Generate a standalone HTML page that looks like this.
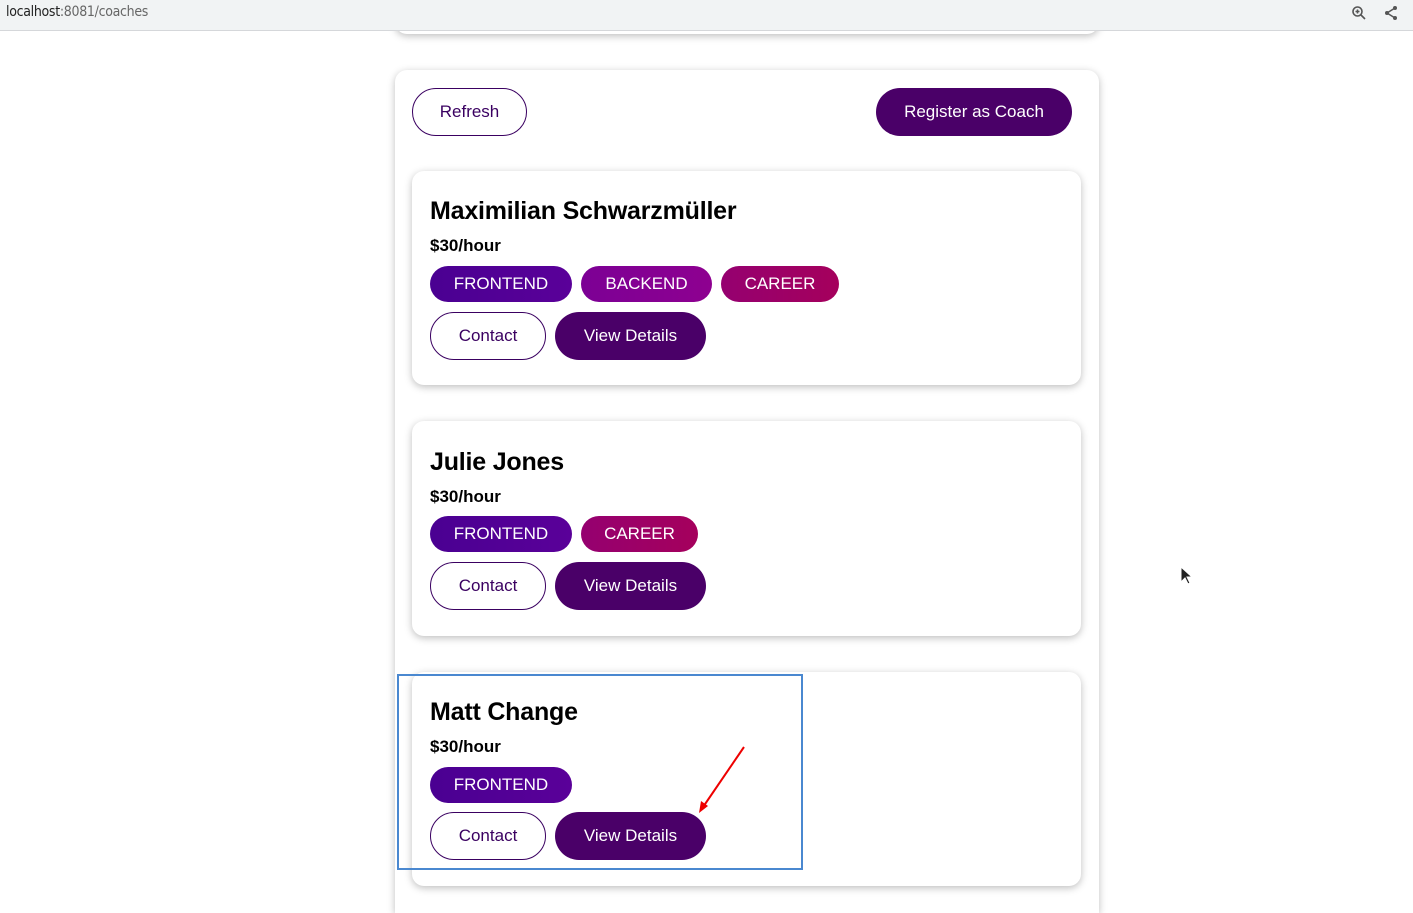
<!DOCTYPE html>
<html><head><meta charset="utf-8"><style>
*{box-sizing:border-box;margin:0;padding:0}
html,body{width:1413px;height:913px;overflow:hidden}
body{background:#fff;font-family:"Liberation Sans",Arial,sans-serif;position:relative}
.bar{position:absolute;left:0;top:0;width:1413px;height:31px;background:#f1f3f4;border-bottom:1px solid #d5d7da;z-index:5}
.url{position:absolute;left:6px;top:4px;font-size:14px;color:#222;font-family:"DejaVu Sans Condensed","Liberation Sans Narrow","Liberation Sans",sans-serif;letter-spacing:-0.3px}
.url span{color:#666}
.abs{position:absolute}
.card{position:absolute;background:#fff;border-radius:12px;box-shadow:0 2px 8px rgba(0,0,0,0.26)}
.pill{position:absolute;display:flex;align-items:center;justify-content:center;border-radius:30px;font-size:17px;color:#fff}
.out{background:#fff;border:1px solid #3a0061;color:#3a0061}
.dark{background:#4a0068}
.fe{background:linear-gradient(90deg,#4a0092,#5a0099)}
.be{background:linear-gradient(90deg,#7c0095,#8e0090)}
.ca{background:linear-gradient(90deg,#950070,#a5005c)}
h3{position:absolute;font-size:25px;font-weight:bold;color:#000;letter-spacing:-0.2px}
.pr{position:absolute;font-size:17px;font-weight:bold;color:#000}
</style></head><body>
<div class="bar"><div class="url">localhost<span>:8081/coaches</span></div>
<svg class="abs" style="left:1351px;top:5px" width="16" height="16" viewBox="0 0 16 16"><circle cx="6.5" cy="6.5" r="4.5" fill="none" stroke="#555" stroke-width="1.6"/><path d="M10 10l4 4M6.5 4.5v4M4.5 6.5h4" stroke="#555" stroke-width="1.6"/></svg>
<svg class="abs" style="left:1384px;top:5px" width="14" height="16" viewBox="0 0 14 16"><circle cx="11" cy="3" r="2" fill="#555"/><circle cx="3" cy="8" r="2" fill="#555"/><circle cx="11" cy="13" r="2" fill="#555"/><path d="M11 3L3 8l8 5" stroke="#555" stroke-width="1.5" fill="none"/></svg>
</div>
<div class="card" style="left:395px;top:-20px;width:704px;height:54px"></div>
<div class="card" style="left:395px;top:70px;width:704px;height:843px;border-bottom-left-radius:0;border-bottom-right-radius:0"></div>
<div class="pill out" style="left:412px;top:88px;width:115px;height:48px">Refresh</div>
<div class="pill dark" style="left:876px;top:88px;width:196px;height:48px">Register as Coach</div>

<div class="card" style="left:412px;top:171px;width:669px;height:214px"></div>
<h3 style="left:430px;top:197px">Maximilian Schwarzmüller</h3>
<div class="pr" style="left:430px;top:236px">$30/hour</div>
<div class="pill fe" style="left:430px;top:266px;width:142px;height:36px">FRONTEND</div>
<div class="pill be" style="left:581px;top:266px;width:131px;height:36px">BACKEND</div>
<div class="pill ca" style="left:721px;top:266px;width:118px;height:36px">CAREER</div>
<div class="pill out" style="left:430px;top:312px;width:116px;height:48px">Contact</div>
<div class="pill dark" style="left:555px;top:312px;width:151px;height:48px">View Details</div>

<div class="card" style="left:412px;top:421px;width:669px;height:215px"></div>
<h3 style="left:430px;top:448px">Julie Jones</h3>
<div class="pr" style="left:430px;top:487px">$30/hour</div>
<div class="pill fe" style="left:430px;top:516px;width:142px;height:36px">FRONTEND</div>
<div class="pill ca" style="left:581px;top:516px;width:117px;height:36px">CAREER</div>
<div class="pill out" style="left:430px;top:562px;width:116px;height:48px">Contact</div>
<div class="pill dark" style="left:555px;top:562px;width:151px;height:48px">View Details</div>

<div class="card" style="left:412px;top:672px;width:669px;height:214px"></div>
<h3 style="left:430px;top:698px">Matt Change</h3>
<div class="pr" style="left:430px;top:737px">$30/hour</div>
<div class="pill fe" style="left:430px;top:767px;width:142px;height:36px">FRONTEND</div>
<div class="pill out" style="left:430px;top:812px;width:116px;height:48px">Contact</div>
<div class="pill dark" style="left:555px;top:812px;width:151px;height:48px">View Details</div>

<div class="abs" style="left:397px;top:674px;width:406px;height:196px;border:2px solid #4a88d0"></div>
<svg class="abs" style="left:690px;top:740px" width="60" height="80" viewBox="0 0 60 80"><path d="M54 7L11 70" stroke="#e00" stroke-width="2"/><path d="M9 73l2-12 7 5z" fill="#e00"/></svg>
<svg class="abs" style="left:1180px;top:566px" width="14" height="20" viewBox="0 0 14 20"><path d="M1 1v15l4-4 3 6 2-1-3-6h5z" fill="#222" stroke="#fff" stroke-width="1"/></svg>
</body></html>
